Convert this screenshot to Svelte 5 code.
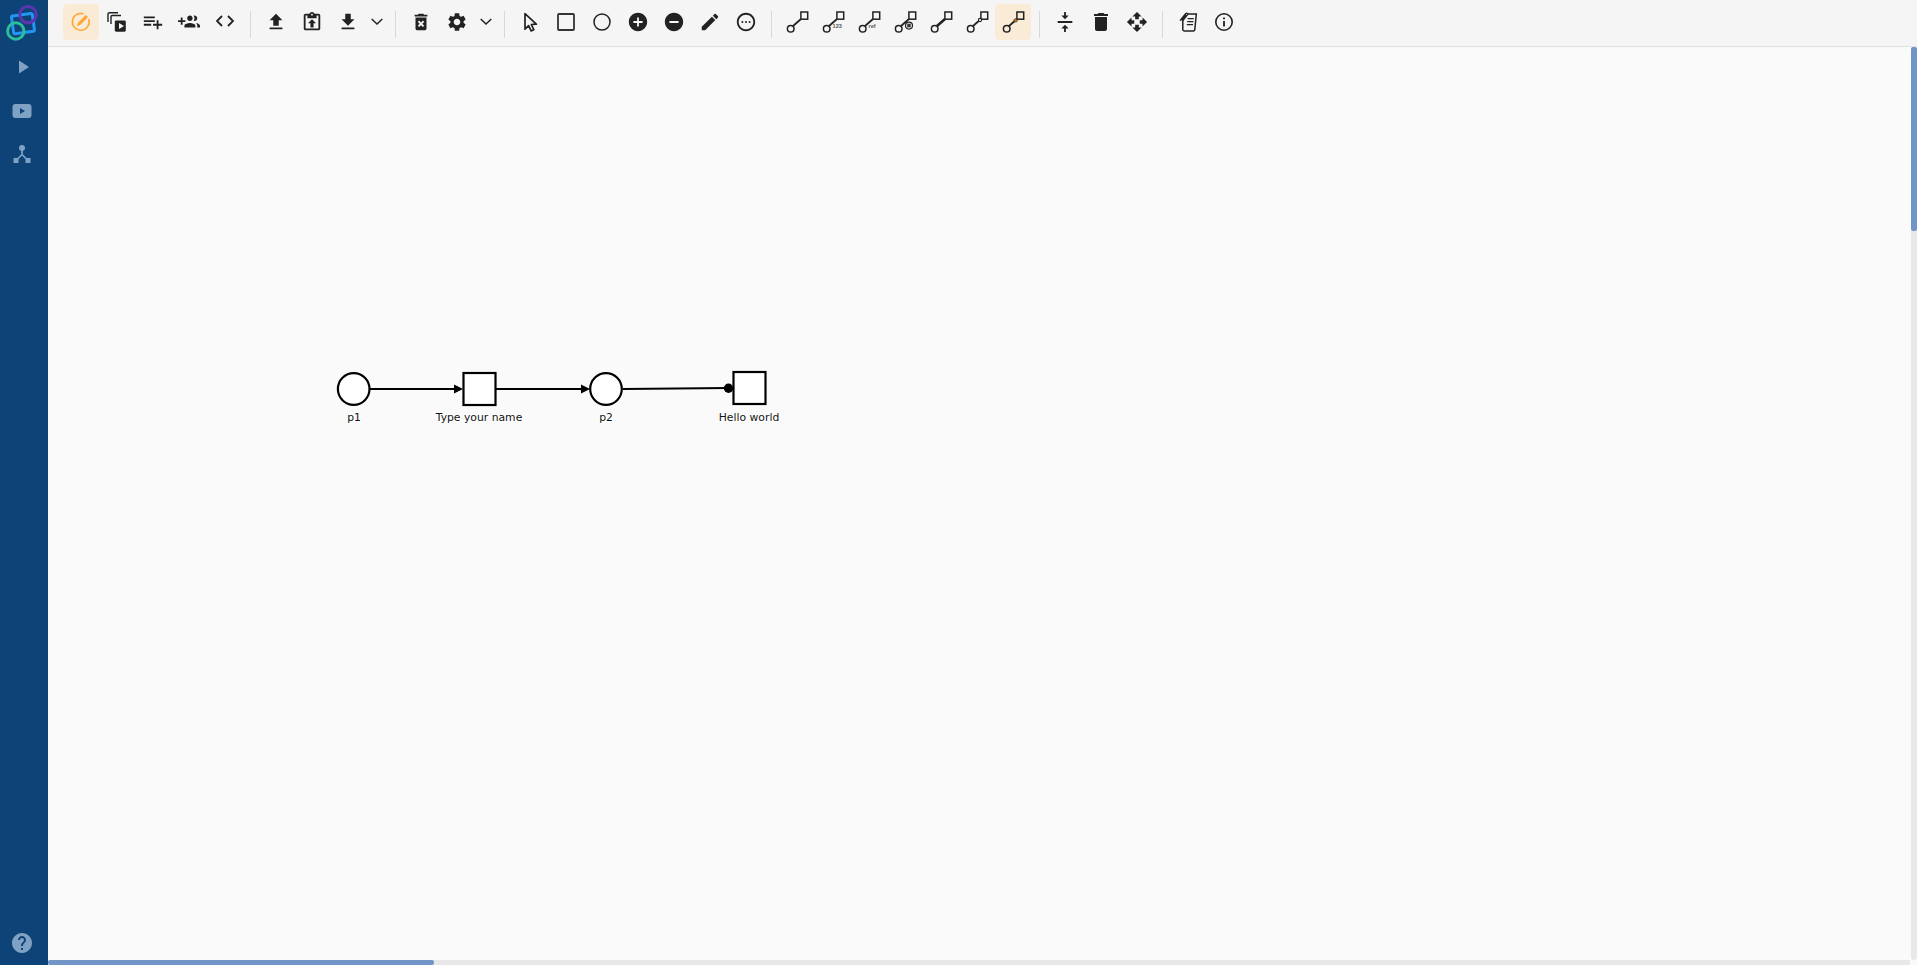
<script>
  // arc tool icons share the place -> line -> transition shape
  const arc = (extra = '', line = '<path d="M8 16 16 9" stroke="#222" stroke-width="1.7"/>') =>
    `<circle cx="5.700" cy="18.700" r="3.300" fill="none" stroke="#222" stroke-width="1.500"/><rect x="15.900" y="2" width="6.800" height="7.200" fill="none" stroke="#222" stroke-width="1.500"/>${line}${extra}`;

  // the material paths are drawn at 22px in the original toolbar
  const p = (d, fill = '#222') => `<g transform="translate(1 1) scale(.9167)"><path d="${d}" fill="${fill}"/></g>`;
  const ring = 'M12 2C6.480 2 2 6.480 2 12s4.480 10 10 10 10-4.480 10-10S17.520 2 12 2z';

  const groups = [
    [
      {
        active: true,
        svg: `<path d="M14 3.700A8.400 8.400 0 1 0 19.900 9.600" fill="none" stroke="#ffa733" stroke-width="1.600" stroke-linecap="round"/><path d="M8 16l.7-2.900 7.500-7.500a.9.900 0 0 1 1.300 0l.9.900a.9.900 0 0 1 0 1.300l-7.500 7.500z" fill="#ffa733"/>`
      },
      {
        svg: `<path d="M3 12V4c0-.8.5-1.300 1.300-1.300H13" fill="none" stroke="#222" stroke-width="1.400"/><path d="M6 14V6.800c0-.8.500-1.300 1.300-1.300H16" fill="none" stroke="#222" stroke-width="1.400"/><rect x="9.800" y="10.400" width="11" height="11.300" rx="1.400" fill="#222"/><path d="M14 13v6l5-3z" fill="#f5f5f5"/>`
      },
      { svg: p('M14 10H2v2h12v-2zm0-4H2v2h12V6zm4 8v-4h-2v4h-4v2h4v4h2v-4h4v-2h-4zM2 16h8v-2H2v2z') },
      { svg: p('M8 10H5V7H3v3H0v2h3v3h2v-3h3v-2zm10 1c1.660 0 2.990-1.340 2.990-3S19.660 5 18 5c-.320 0-.630.050-.910.140.570.810.900 1.790.900 2.860s-.340 2.040-.900 2.860c.280.090.590.140.910.140zm-5 0c1.660 0 2.990-1.340 2.990-3S14.660 5 13 5c-1.660 0-3 1.340-3 3s1.340 3 3 3zm6.620 2.160c.830.730 1.380 1.660 1.380 2.840v2h3v-2c0-1.540-2.370-2.490-4.380-2.840zM13 13c-2 0-6 1-6 3v2h12v-2c0-2-4-3-6-3z') },
      { svg: `<path d="M9 6 4 11l5 5M15 6l5 5-5 5" fill="none" stroke="#222" stroke-width="1.800"/>` }
    ],
    [
      { svg: p('M9 16h6v-6h4l-7-7-7 7h4zm-4 2h14v2H5z') },
      { svg: p('M19 3h-4.180C14.400 1.840 13.300 1 12 1s-2.400.840-2.820 2H5c-1.100 0-2 .900-2 2v14c0 1.100.900 2 2 2h14c1.100 0 2-.900 2-2V5c0-1.100-.900-2-2-2zm-7 0c.550 0 1 .450 1 1s-.450 1-1 1-1-.450-1-1 .450-1 1-1zm7 16H5V5h2v3h10V5h2v14z') + p('M12 9l-4.400 4.400h2.700V18h3.400v-4.600h2.700z') },
      { svg: p('M19 9h-4V3H9v6H5l7 7 7-7zM5 18v2h14v-2H5z') },
      { caret: true },
    ],
    [
      { svg: p('M6 19c0 1.100.900 2 2 2h8c1.100 0 2-.900 2-2V7H6v12zm2.460-7.120l1.410-1.410L12 12.590l2.120-2.120 1.410 1.410L13.410 14l2.120 2.120-1.410 1.410L12 15.410l-2.120 2.120-1.410-1.410L10.590 14l-2.130-2.120zM15.500 4l-1-1h-5l-1 1H5v2h14V4z') },
      { svg: p('M19.140 12.940c.040-.300.060-.610.060-.940 0-.320-.020-.640-.070-.940l2.030-1.580c.180-.140.230-.410.120-.610l-1.920-3.320c-.120-.220-.370-.290-.590-.220l-2.390.960c-.500-.380-1.030-.700-1.620-.940l-.360-2.540c-.040-.240-.240-.410-.480-.410h-3.840c-.240 0-.430.170-.470.410l-.360 2.540c-.590.240-1.130.570-1.620.940l-2.390-.960c-.220-.080-.470 0-.590.220L2.740 8.870c-.120.210-.080.470.120.610l2.030 1.580c-.050.300-.090.630-.090.940s.020.640.070.940l-2.030 1.580c-.180.140-.230.410-.120.610l1.920 3.320c.120.220.370.290.590.220l2.390-.960c.500.380 1.030.700 1.620.940l.360 2.540c.050.240.240.410.480.410h3.840c.240 0 .440-.170.470-.410l.360-2.540c.590-.240 1.130-.560 1.620-.940l2.390.960c.220.080.470 0 .590-.220l1.920-3.320c.120-.220.070-.470-.120-.610l-2.010-1.580zM12 15.600c-1.980 0-3.600-1.620-3.600-3.600s1.620-3.600 3.600-3.600 3.600 1.620 3.600 3.600-1.620 3.600-3.600 3.600z') },
      { caret: true }
    ],
    [
      { svg: `<path d="M7 3.600v15.600l3.600-3.500 2.500 5.200 2.700-1.200-2.500-5.200 5-.300z" fill="none" stroke="#222" stroke-width="1.700" stroke-linejoin="round"/>` },
      { svg: `<rect x="4" y="4" width="16" height="16" rx="1" fill="none" stroke="#333" stroke-width="1.800"/>` },
      { svg: `<circle cx="12" cy="12" r="8" fill="none" stroke="#222" stroke-width="1.500"/>` },
      { svg: p(ring + 'm5 11h-4v4h-2v-4H7v-2h4V7h2v4h4v2z') },
      { svg: p(ring + 'm5 11H7v-2h10v2z') },
      { svg: p('M3 17.250V21h3.750L17.810 9.940l-3.750-3.750L3 17.250zM20.710 7.040c.390-.390.390-1.020 0-1.410l-2.340-2.340c-.390-.390-1.020-.390-1.410 0l-1.830 1.830 3.750 3.750 1.830-1.830z') },
      { svg: p(ring + 'm0 18c-4.420 0-8-3.580-8-8s3.580-8 8-8 8 3.580 8 8-3.580 8-8 8z') + '<circle cx="8.400" cy="12" r="1" fill="#222"/><circle cx="12" cy="12" r="1" fill="#222"/><circle cx="15.600" cy="12" r="1" fill="#222"/>' }
    ],
    [
      { svg: arc() },
      { svg: arc('<text x="11.600" y="18.400" class="mini">123</text>') },
      { svg: arc('<text x="11.600" y="18.400" class="mini">ref</text>') },
      { svg: arc('<circle cx="16" cy="15.600" r="3.500" fill="none" stroke="#222" stroke-width="1.200"/><circle cx="16" cy="15.600" r="2" fill="#555"/><path d="M14.400 14l3.200 3.200M17.600 14l-3.200 3.200" stroke="#222" stroke-width="1"/>') },
      { svg: arc('', '<path d="M8 16 16 9" stroke="#222" stroke-width="2.600"/>') },
      { svg: arc('<circle cx="15" cy="10" r="1.600" fill="#f5f5f5" stroke="#222" stroke-width="1.100"/>') },
      { active: true, svg: arc('<circle cx="14.600" cy="10.400" r="1.700" fill="#c9751f" stroke="#222" stroke-width=".6"/>') }
    ],
    [
      { svg: p('M8 19h3v4h2v-4h3l-4-4-4 4zm8-14h-3V1h-2v4H8l4 4 4-4zM4 11v2h16v-2H4z') },
      { svg: `<path d="M6 19c0 1.100.900 2 2 2h8c1.100 0 2-.900 2-2V7H6v12zM19 4h-3.500l-1-1h-5l-1 1H5v2h14V4z" fill="#222"/>` },
      { svg: p('M10 9h4V6h3l-5-5-5 5h3v3zm-1 1H6V7l-5 5 5 5v-3h3v-4zm14 2l-5-5v3h-3v4h3v3l5-5zm-9 3h-4v3H7l5 5 5-5h-3v-3z') },
    ],
    [
      { svg: `<path d="M6.800 10v9.600c0 .9.700 1.400 1.400 1.400h9c.9 0 1.500-.6 1.600-1.400L20.300 4H11.600" fill="none" stroke="#222" stroke-width="1.500"/><path d="M11.600 8.600h6.200M11.200 11.600h6.200M10.800 14.600h6.200" stroke="#222" stroke-width="1.400"/><path d="M4 10.600 9.600 3.800c1-1.100 2.700-.2 1.800 1.100L7.200 10c-.6.700-1.400.1-.9-.6L10 4.800" fill="none" stroke="#222" stroke-width="1.400"/>` },
      { svg: `<circle cx="12" cy="12" r="8.200" fill="none" stroke="#222" stroke-width="1.600"/>` + p('M11 7h2v2h-2zm0 4h2v6h-2z') }
    ]
  ];
</script>

<div class="app">
  <nav class="sidebar">
    <div class="logo">
      <svg width="40" height="42" viewBox="0 0 40 42">
        <rect x="12.400" y="14.800" width="21" height="18" rx="1.500" transform="rotate(-8 22 23)" fill="none" stroke="#2196f3" stroke-width="3"/>
        <circle cx="28" cy="14.600" r="8.200" fill="none" stroke="#5e35b1" stroke-width="3"/>
        <circle cx="15.800" cy="31" r="8.200" fill="none" stroke="#2bbd9c" stroke-width="3"/>
      </svg>
    </div>
    <button class="side" aria-label="Run">
      <svg width="24" height="24" viewBox="0 0 24 24"><path d="M7 5.500v13l10-6.500z"/></svg>
    </button>
    <button class="side" aria-label="Tutorials">
      <svg width="24" height="24" viewBox="0 0 24 24"><path fill-rule="evenodd" d="M5.500 5h13C20.500 5 21.500 6 21.500 8v8c0 2-1 3-3 3h-13c-2 0-3-1-3-3V8c0-2 1-3 3-3zM10 9v6l5-3z"/></svg>
    </button>
    <button class="side" aria-label="Network">
      <svg width="24" height="24" viewBox="0 0 24 24"><circle cx="12" cy="5" r="3"/><rect x="3.500" y="15" width="5" height="5" rx=".5"/><rect x="15.500" y="15" width="5" height="5" rx=".5"/><path d="M12 7v4.500L6.500 17M12 11.500l5.500 5.500" fill="none" stroke="#7fa2c4" stroke-width="1.700"/></svg>
    </button>
    <button class="side help" aria-label="Help">
      <svg width="24" height="24" viewBox="0 0 24 24"><path d="M12 2C6.480 2 2 6.480 2 12s4.480 10 10 10 10-4.480 10-10S17.520 2 12 2zm1 17h-2v-2h2v2zm2.070-7.750l-.900.920C13.450 12.900 13 13.500 13 15h-2v-.500c0-1.100.450-2.100 1.170-2.830l1.240-1.260c.370-.360.590-.860.590-1.410 0-1.100-.900-2-2-2s-2 .900-2 2H8c0-2.210 1.790-4 4-4s4 1.790 4 4c0 .880-.360 1.680-.930 2.250z"/></svg>
    </button>
  </nav>

  <main class="main">
    <header class="toolbar">
      {#each groups as group, i}
        {#if i > 0}<span class="sep"></span>{/if}
        {#each group as item}
          {#if item.caret}
            <button class="tool caret" aria-label="More">
              <svg width="22" height="22" viewBox="0 0 22 22"><path d="M5.700 8 11 13l5.300-5" fill="none" stroke="#222" stroke-width="1.500"/></svg>
            </button>
          {:else}
            <button class="tool" class:active={item.active} aria-label="Tool">
              <svg width="24" height="24" viewBox="0 0 24 24">{@html item.svg}</svg>
            </button>
          {/if}
        {/each}
      {/each}
    </header>

    <section class="canvas">
      <svg class="net" viewBox="48 47 1869 918" width="1869" height="918">
        <path class="arc" d="M370 389H456"/>
        <path class="head" d="M463 389 454 384.500V393.500z"/>
        <path class="arc" d="M496 389H583"/>
        <path class="head" d="M590 389 581 384.500V393.500z"/>
        <path class="arc" d="M623 389 729 388"/>
        <circle cx="728.500" cy="388.300" r="4.700"/>

        <circle class="node" cx="353.700" cy="389" r="15.800"/>
        <rect class="node" x="463.500" y="373" width="32" height="32"/>
        <circle class="node" cx="606" cy="389" r="15.800"/>
        <rect class="node" x="733.500" y="372" width="32" height="32"/>

        <text x="354" y="421">p1</text>
        <text x="479" y="421">Type your name</text>
        <text x="606" y="421">p2</text>
        <text x="749" y="421">Hello world</text>
      </svg>

      <div class="bar vertical"><div class="thumb"></div></div>
      <div class="bar horizontal"><div class="thumb"></div></div>
    </section>
  </main>
</div>

<style>
  :global(body) {
    margin: 0;
    overflow: hidden;
  }

  .app {
    display: flex;
    height: 965px;
    font-family: "DejaVu Sans", Verdana, sans-serif;
  }

  .sidebar {
    width: 48px;
    flex: none;
    display: flex;
    flex-direction: column;
    align-items: center;
    background: #0d4377;
  }

  .logo {
    height: 45px;
    width: 48px;
  }

  .logo svg {
    display: block;
  }

  .side {
    width: 48px;
    height: 44px;
    padding: 0;
    border: 0;
    background: none;
    display: flex;
    align-items: center;
    justify-content: center;
  }

  .side svg {
    fill: #7fa2c4;
    margin-right: 4px;
  }

  .side:first-of-type svg {
    margin-right: 0;
  }

  .help {
    margin-top: auto;
  }

  .main {
    flex: 1;
    min-width: 0;
    display: flex;
    flex-direction: column;
  }

  .toolbar {
    height: 47px;
    flex: none;
    display: flex;
    align-items: flex-start;
    padding: 4px 0 0 15px;
    box-sizing: border-box;
    background: #f5f5f5;
    border-bottom: 1px solid #e0e0e0;
  }

  .tool {
    width: 36px;
    height: 36px;
    padding: 0;
    border: 0;
    border-radius: 4px;
    background: none;
    display: flex;
    align-items: center;
    justify-content: center;
  }

  .tool.caret {
    width: 22px;
  }

  .tool.active {
    background: #faebd7;
  }

  .sep {
    width: 1px;
    height: 27px;
    margin: 7px 7px 0;
    background: #d8d8d8;
  }

  .tool.active + .sep {
    margin-left: 8px;
  }

  .canvas {
    position: relative;
    flex: 1;
    background: #fafafa;
    overflow: hidden;
  }

  .net {
    display: block;
  }

  .net text {
    font-size: 10.800px;
    fill: #111;
    text-anchor: middle;
    paint-order: stroke;
    stroke: #fff;
    stroke-width: 2px;
  }

  :global(.mini) {
    font-size: 5.500px;
    font-weight: 700;
    fill: #555;
  }

  .arc {
    fill: none;
    stroke: #000;
    stroke-width: 2.200;
  }

  .head {
    fill: #000;
  }

  .node {
    fill: #fff;
    stroke: #000;
    stroke-width: 2.200;
  }

  .bar {
    position: absolute;
    background: #e8e8e8;
  }

  .thumb {
    background: #7295c8;
    border-radius: 2px;
  }

  .vertical {
    top: 0;
    right: 0;
    width: 6px;
    height: 913px;
    border-radius: 3px;
  }

  .vertical .thumb {
    height: 184px;
  }

  .horizontal {
    left: 0;
    bottom: 0;
    width: 1862px;
    height: 5px;
  }

  .horizontal .thumb {
    width: 386px;
    height: 5px;
  }
</style>
